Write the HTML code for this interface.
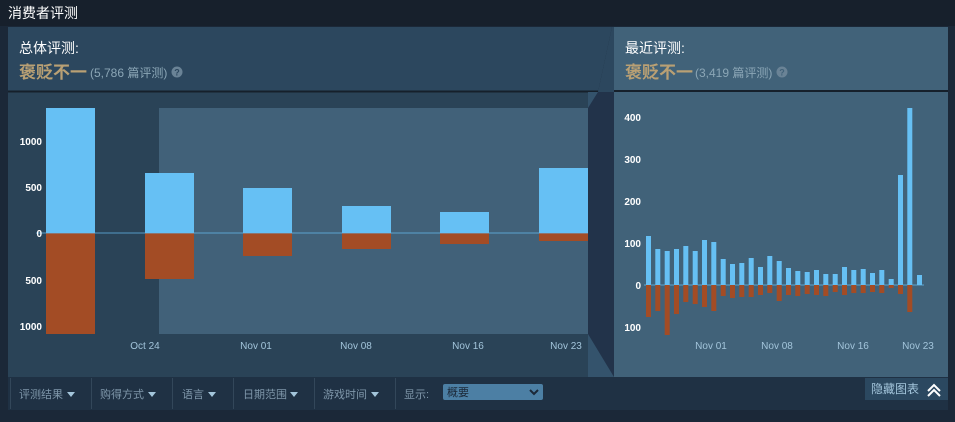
<!DOCTYPE html>
<html><head><meta charset="utf-8"><style>
body{margin:0;width:955px;height:422px;background:#1b2838;overflow:hidden;font-family:"Liberation Sans","Noto Sans CJK SC",sans-serif}
</style></head><body>
<svg width="955" height="422" xmlns="http://www.w3.org/2000/svg" style="position:absolute;left:0;top:0;font-family:'Liberation Sans','Noto Sans CJK SC',sans-serif">
<rect x="0" y="0" width="955" height="422" fill="#1b2838"/>
<rect x="0" y="0" width="955" height="26" fill="#17202c"/>
<text x="8" y="18" fill="#ffffff" font-size="14">消费者评测</text>
<polygon points="8,27 612,27 598,92 8,92" fill="#2c475e"/>
<rect x="8" y="92" width="580" height="285" fill="#2a4357"/>
<line x1="8" y1="91.5" x2="598" y2="91.5" stroke="#16202b" stroke-width="2"/>
<rect x="588" y="92" width="26" height="285" fill="#22334a"/>
<polygon points="598,92 614,92 614,27 612,27" fill="#2c475e"/>
<polygon points="588,92 598,92 588,108" fill="#34536c"/>
<polygon points="588,334 614,377 588,377" fill="#34536c"/>
<rect x="159" y="108" width="429" height="226" fill="#416179"/>
<rect x="614" y="27" width="334" height="350" fill="#416279"/>
<line x1="614" y1="91" x2="948" y2="91" stroke="#16202b" stroke-width="2"/>
<text x="19" y="53" fill="#ffffff" font-size="14">总体评测:</text>
<text x="19" y="78" fill="#b9a074" font-size="17" font-weight="bold">褒贬不一</text>
<text x="90" y="77" fill="#8ba6b6" font-size="12">(5,786 篇评测)</text>
<circle cx="177" cy="72" r="5.5" fill="#6a8396"/><text x="177" y="75.5" fill="#2c475e" font-size="9" font-weight="bold" text-anchor="middle">?</text>
<text x="625" y="53" fill="#ffffff" font-size="14">最近评测:</text>
<text x="625" y="78" fill="#b9a074" font-size="17" font-weight="bold">褒贬不一</text>
<text x="695" y="77" fill="#8ba6b6" font-size="12">(3,419 篇评测)</text>
<circle cx="782" cy="72" r="5.5" fill="#6a8396"/><text x="782" y="75.5" fill="#416279" font-size="9" font-weight="bold" text-anchor="middle">?</text>
<g fill="#66c0f4">
<rect x="46" y="108" width="49" height="125"/><rect x="145" y="173" width="49" height="60"/>
<rect x="243" y="188" width="49" height="45"/><rect x="342" y="206" width="49" height="27"/>
<rect x="440" y="212" width="49" height="21"/><rect x="539" y="168" width="49" height="65"/>
</g>
<g fill="#a34c25">
<rect x="46" y="233" width="49" height="101"/><rect x="145" y="233" width="49" height="46"/>
<rect x="243" y="233" width="49" height="23"/><rect x="342" y="233" width="49" height="16"/>
<rect x="440" y="233" width="49" height="11"/><rect x="539" y="233" width="49" height="8"/>
</g>
<line x1="36" y1="233" x2="588" y2="233" stroke="#66c0f4" stroke-width="1" opacity="0.7"/>
<g fill="#ffffff" font-size="10" font-weight="bold" text-anchor="end">
<text x="42" y="145">1000</text><text x="42" y="191">500</text><text x="42" y="237">0</text>
<text x="42" y="284">500</text><text x="42" y="330">1000</text>
</g>
<g fill="#a3c5db" font-size="10" text-anchor="middle">
<text x="145" y="349">Oct 24</text><text x="256" y="349">Nov 01</text><text x="356" y="349">Nov 08</text>
<text x="468" y="349">Nov 16</text><text x="566" y="349">Nov 23</text>
</g>
<line x1="644" y1="285" x2="924" y2="285" stroke="#66c0f4" opacity="0.7"/>
<g fill="#ffffff" font-size="10" font-weight="bold" text-anchor="end">
<text x="641" y="121">400</text><text x="641" y="163">300</text><text x="641" y="205">200</text>
<text x="641" y="247">100</text><text x="641" y="289">0</text><text x="641" y="331">100</text>
</g>
<g fill="#a3c5db" font-size="10" text-anchor="middle">
<text x="711" y="349">Nov 01</text><text x="777" y="349">Nov 08</text><text x="853" y="349">Nov 16</text><text x="918" y="349">Nov 23</text>
</g>
<rect x="8" y="377" width="940" height="33" fill="#1f3144"/>
<g stroke="#33475a"><line x1="10.5" y1="378" x2="10.5" y2="409"/><line x1="91.5" y1="378" x2="91.5" y2="409"/><line x1="172.5" y1="378" x2="172.5" y2="409"/><line x1="233.5" y1="378" x2="233.5" y2="409"/><line x1="314.5" y1="378" x2="314.5" y2="409"/><line x1="395.5" y1="378" x2="395.5" y2="409"/></g>
<g fill="#7f97aa" font-size="11">
<text x="19" y="398">评测结果</text><text x="100" y="398">购得方式</text><text x="182" y="398">语言</text>
<text x="243" y="398">日期范围</text><text x="323" y="398">游戏时间</text><text x="404" y="398">显示:</text>
</g>
<g fill="#a3c5db"><polygon points="67,392 75,392 71,397"/><polygon points="148,392 156,392 152,397"/><polygon points="208,392 216,392 212,397"/><polygon points="290,392 298,392 294,397"/><polygon points="371,392 379,392 375,397"/></g>
<rect x="443" y="384" width="100" height="16" rx="2" fill="#4c7fa4"/>
<text x="447" y="396" fill="#1b2838" font-size="11">概要</text>
<polyline points="530,390 534,394 538,390" fill="none" stroke="#1b2838" stroke-width="2"/>
<rect x="865" y="378" width="83" height="22" fill="#2b4860"/>
<text x="871" y="393" fill="#a3c5db" font-size="12">隐藏图表</text>
<polyline points="928,391 934,385 940,391" fill="none" stroke="#fff" stroke-width="2"/>
<polyline points="928,396 934,390 940,396" fill="none" stroke="#fff" stroke-width="2"/>
<g fill="#66c0f4">
<rect x="646" y="236" width="5" height="49"/><rect x="655.3" y="249" width="5" height="36"/><rect x="664.7" y="251" width="5" height="34"/><rect x="674" y="249" width="5" height="36"/><rect x="683.3" y="246" width="5" height="39"/><rect x="692.7" y="251" width="5" height="34"/><rect x="702" y="240" width="5" height="45"/><rect x="711.3" y="242" width="5" height="43"/><rect x="720.7" y="259" width="5" height="26"/><rect x="730" y="264" width="5" height="21"/><rect x="739.3" y="263" width="5" height="22"/><rect x="748.7" y="258" width="5" height="27"/><rect x="758" y="267" width="5" height="18"/><rect x="767.3" y="256" width="5" height="29"/><rect x="776.7" y="261" width="5" height="24"/><rect x="786" y="268" width="5" height="17"/><rect x="795.3" y="271" width="5" height="14"/><rect x="804.7" y="272" width="5" height="13"/><rect x="814" y="270" width="5" height="15"/><rect x="823.3" y="274" width="5" height="11"/><rect x="832.7" y="274" width="5" height="11"/><rect x="842" y="267" width="5" height="18"/><rect x="851.3" y="270" width="5" height="15"/><rect x="860.7" y="269" width="5" height="16"/><rect x="870" y="273" width="5" height="12"/><rect x="879.3" y="270" width="5" height="15"/><rect x="888.7" y="279" width="5" height="6"/><rect x="898" y="175" width="5" height="110"/><rect x="907.3" y="108" width="5" height="177"/><rect x="917" y="275" width="5" height="10"/>
</g>
<g fill="#a34c25">
<rect x="646" y="285" width="5" height="32"/><rect x="655.3" y="285" width="5" height="26"/><rect x="664.7" y="285" width="5" height="50"/><rect x="674" y="285" width="5" height="29"/><rect x="683.3" y="285" width="5" height="17"/><rect x="692.7" y="285" width="5" height="19"/><rect x="702" y="285" width="5" height="22"/><rect x="711.3" y="285" width="5" height="26"/><rect x="720.7" y="285" width="5" height="11"/><rect x="730" y="285" width="5" height="13"/><rect x="739.3" y="285" width="5" height="12"/><rect x="748.7" y="285" width="5" height="12"/><rect x="758" y="285" width="5" height="10"/><rect x="767.3" y="285" width="5" height="8"/><rect x="776.7" y="285" width="5" height="16"/><rect x="786" y="285" width="5" height="10"/><rect x="795.3" y="285" width="5" height="11"/><rect x="804.7" y="285" width="5" height="9"/><rect x="814" y="285" width="5" height="10"/><rect x="823.3" y="285" width="5" height="11"/><rect x="832.7" y="285" width="5" height="7"/><rect x="842" y="285" width="5" height="10"/><rect x="851.3" y="285" width="5" height="8"/><rect x="860.7" y="285" width="5" height="8"/><rect x="870" y="285" width="5" height="7"/><rect x="879.3" y="285" width="5" height="8"/><rect x="888.7" y="285" width="5" height="3"/><rect x="898" y="285" width="5" height="9"/><rect x="907.3" y="285" width="5" height="27"/>
</g>
</svg>
</body></html>
